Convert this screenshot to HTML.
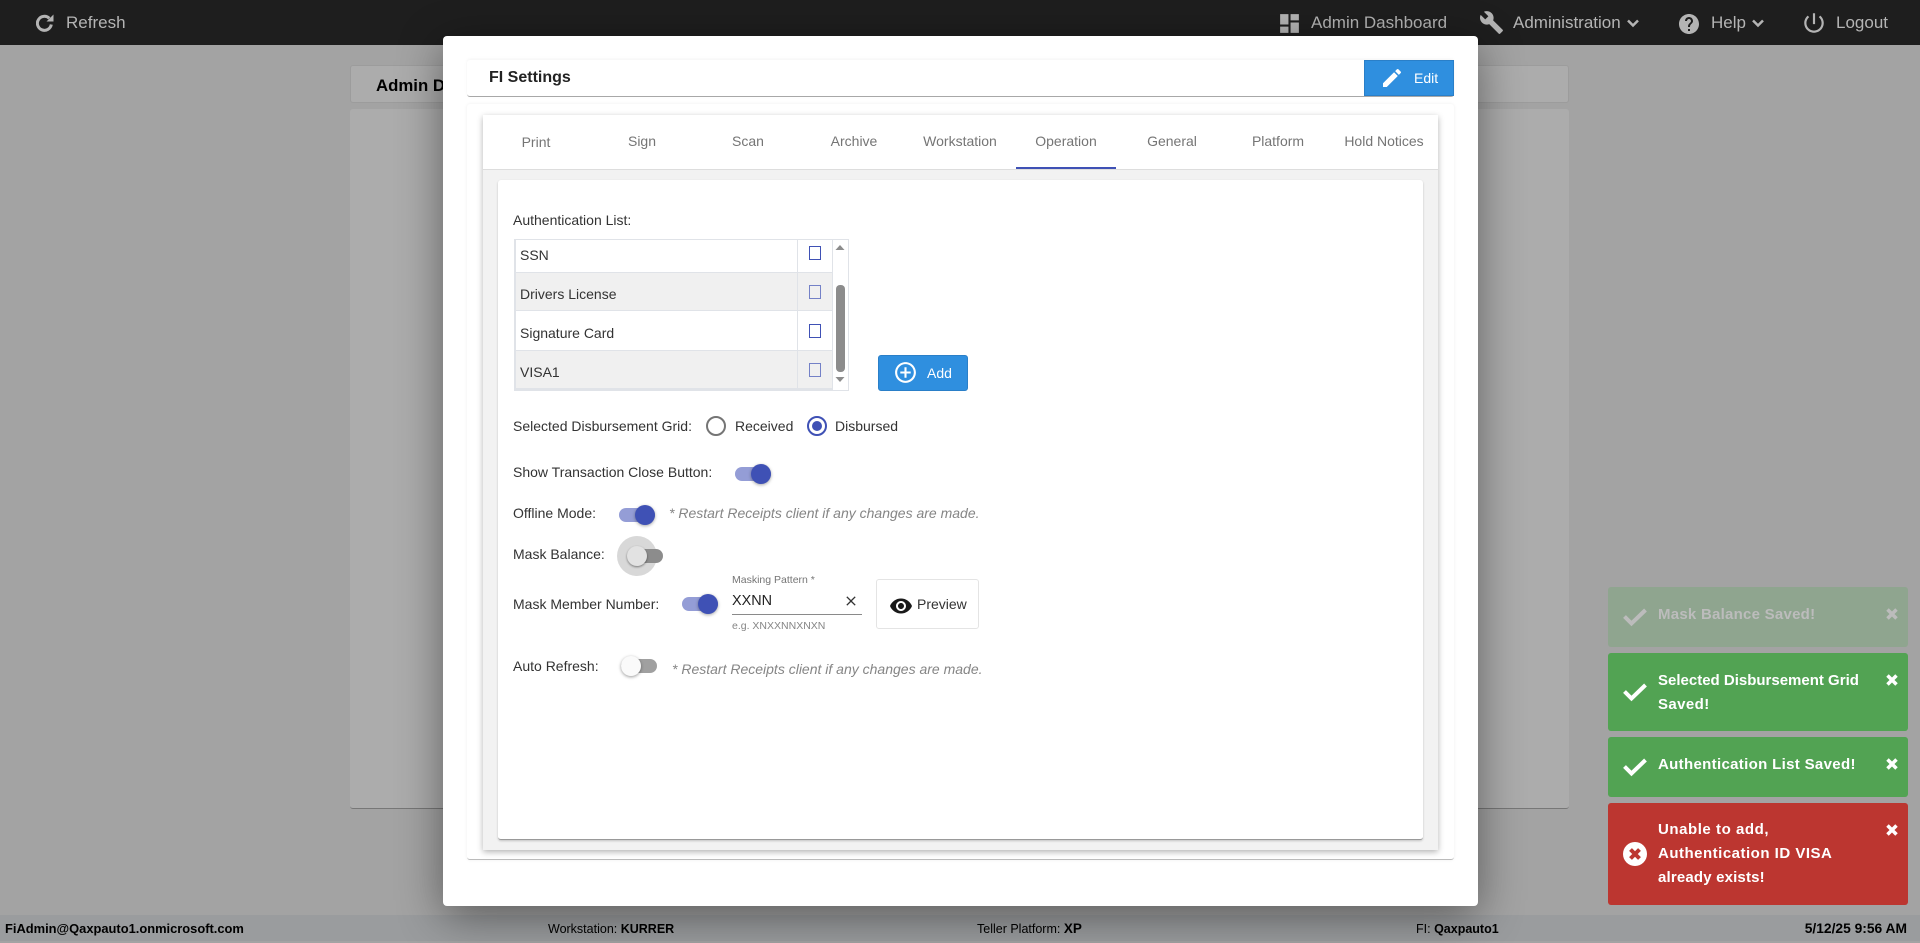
<!DOCTYPE html>
<html><head><meta charset="utf-8"><title>FI Settings</title>
<style>
*{box-sizing:border-box}
html,body{margin:0;padding:0;width:1920px;height:941px;overflow:hidden;background:#a3a3a3;font-family:"Liberation Sans",sans-serif;color:#333}
.a{position:absolute}
.t{position:absolute;white-space:nowrap;line-height:20px;font-size:14px;color:#333;transform:translateY(-10px)}
.nav{position:absolute;left:0;top:0;width:1920px;height:45px;background:#1e1e1e}
.nt{position:absolute;top:13px;font-size:17px;line-height:20px;color:#b4b4b4;white-space:nowrap}
.foot{position:absolute;left:0;top:915px;width:1920px;height:26px;background:#9a9c9e;font-size:12.500px;line-height:28px;color:#000;white-space:nowrap}
.foot span{position:absolute;top:0}
.tab{position:absolute;top:131px;width:106px;text-align:center;font-size:14px;line-height:20px;color:#757575;white-space:nowrap}
.track{position:absolute;width:36px;height:14px;border-radius:7px;background:#949dd6}
.thumb{position:absolute;width:20px;height:20px;border-radius:50%;background:#3f51b5;box-shadow:0 1px 3px rgba(0,0,0,.35)}
.toast{position:absolute;left:1608px;width:300px;border-radius:3px;color:#fff;font-weight:bold;font-size:15px;line-height:24px}
.toast .m{position:absolute;left:50px;white-space:nowrap}
.toast svg{position:absolute}
.cb{position:absolute;width:12px;height:14px;border:1px solid #3f51b5;background:transparent}
</style></head><body>

<div class="a" style="left:350px;top:65px;width:1219px;height:38px;background:#acacac;border:1px solid #9c9c9c;border-radius:3px"></div>
<div class="t" style="left:376px;top:86px;font-size:16.800px;font-weight:bold;color:#000">Admin Dashboard</div>
<div class="a" style="left:350px;top:109px;width:1219px;height:700px;background:#acacac;border-bottom:1px solid #777;border-radius:3px"></div>

<div class="nav">
<svg class="a" style="left:36px;top:14px" width="18" height="18" viewBox="0 0 18 18" fill="none"><path d="M13.300 4.300A7 7 0 1 0 15.300 10.500" stroke="#b4b4b4" stroke-width="3"/><path d="M17.500 .5V7.500H10.500Z" fill="#b4b4b4"/></svg>
<div class="nt" style="left:66px">Refresh</div>
<svg class="a" style="left:1277px;top:11px" width="25" height="25" viewBox="0 0 24 24" fill="#b4b4b4"><path d="M3 13h8V3H3v10zm0 8h8v-6H3v6zm10 0h8V11h-8v10zm0-18v6h8V3h-8z"/></svg>
<div class="nt" style="left:1311px">Admin Dashboard</div>
<svg class="a" style="left:1479px;top:10px" width="25" height="25" viewBox="0 0 24 24" fill="#b4b4b4"><path d="M22.700 19l-9.100-9.100c.9-2.300.4-5-1.500-6.900-2-2-5-2.400-7.400-1.300L9 6 6 9 1.600 4.700C.4 7.100.9 10.100 2.900 12.100c1.900 1.900 4.600 2.400 6.900 1.500l9.100 9.100c.4.4 1 .4 1.400 0l2.300-2.300c.5-.4.5-1.100.1-1.400z"/></svg>
<div class="nt" style="left:1513px">Administration</div>
<svg class="a" style="left:1625px;top:15px" width="16" height="16" viewBox="0 0 16 16" fill="none" stroke="#b4b4b4" stroke-width="2.500"><path d="M3 5.500l5 5 5-5"/></svg>
<svg class="a" style="left:1677px;top:11.500px" width="24" height="24" viewBox="0 0 24 24" fill="#b4b4b4"><path d="M12 2C6.480 2 2 6.480 2 12s4.480 10 10 10 10-4.480 10-10S17.520 2 12 2zm1 17h-2v-2h2v2zm2.070-7.750l-.9.920C13.450 12.900 13 13.500 13 15h-2v-.5c0-1.100.45-2.100 1.170-2.830l1.240-1.260c.37-.36.59-.86.59-1.410 0-1.100-.9-2-2-2s-2 .9-2 2H8c0-2.210 1.790-4 4-4s4 1.790 4 4c0 .88-.36 1.680-.93 2.250z"/></svg>
<div class="nt" style="left:1711px">Help</div>
<svg class="a" style="left:1750px;top:15px" width="16" height="16" viewBox="0 0 16 16" fill="none" stroke="#b4b4b4" stroke-width="2.500"><path d="M3 5.500l5 5 5-5"/></svg>
<svg class="a" style="left:1801px;top:10px" width="26" height="26" viewBox="0 0 24 24" fill="#b4b4b4"><path d="M13 3h-2v10h2V3zm4.830 2.170l-1.420 1.420C17.990 7.860 19 9.810 19 12c0 3.870-3.130 7-7 7s-7-3.130-7-7c0-2.190 1.010-4.140 2.580-5.420L6.170 5.170C4.230 6.820 3 9.260 3 12c0 4.970 4.030 9 9 9s9-4.030 9-9c0-2.740-1.230-5.180-3.170-6.830z"/></svg>
<div class="nt" style="left:1836px">Logout</div>
</div>

<div class="foot">
<span style="left:5px;font-weight:bold;font-size:12.900px">FiAdmin@Qaxpauto1.onmicrosoft.com</span>
<span style="left:548px">Workstation: <b>KURRER</b></span>
<span style="left:977px">Teller Platform: <b style="font-size:13.500px">XP</b></span>
<span style="left:1416px">FI: <b>Qaxpauto1</b></span>
<span style="right:13px;font-weight:bold;font-size:13.800px">5/12/25 9:56 AM</span>
</div>

<!-- modal -->
<div class="a" style="left:443px;top:36px;width:1035px;height:870px;background:#fff;border-radius:4px;box-shadow:0 10px 45px rgba(0,0,0,.45)"></div>
<div class="a" style="left:467px;top:60px;width:987px;height:37px;background:#fff;border-radius:3px;border-bottom:1px solid #a8a8a8;box-shadow:0 -1px 3px rgba(0,0,0,.05)"></div>
<div class="t" style="left:489px;top:78px;font-size:16px;font-weight:bold;color:#222">FI Settings</div>
<div class="a" style="left:1364px;top:60px;width:90px;height:36px;background:#2f8fdf;border:1px solid #2a7fc8"></div>
<svg class="a" style="left:1380px;top:66px" width="24" height="24" viewBox="0 0 24 24" fill="#fff"><path d="M3 17.250V21h3.750L17.810 9.940l-3.750-3.750L3 17.250zM20.710 7.040c.39-.39.39-1.020 0-1.410l-2.340-2.340c-.39-.39-1.020-.39-1.410 0l-1.830 1.830 3.750 3.750 1.830-1.830z"/></svg>
<div class="t" style="left:1414px;top:78px;font-size:14px;color:#fff">Edit</div>

<div class="a" style="left:467px;top:104px;width:987px;height:756px;background:#fff;border-radius:3px;border-bottom:1px solid #bbb;box-shadow:0 0 3px rgba(0,0,0,.07)"></div>
<div class="a" style="left:483px;top:115px;width:955px;height:735px;background:#f2f2f2;box-shadow:0 2px 6px rgba(0,0,0,.3)"></div>
<div class="a" style="left:483px;top:115px;width:955px;height:55px;background:#fff;border-bottom:1px solid #ddd"></div>
<div class="tab" style="left:483px;top:132px">Print</div>
<div class="tab" style="left:589px">Sign</div>
<div class="tab" style="left:695px">Scan</div>
<div class="tab" style="left:801px">Archive</div>
<div class="tab" style="left:907px">Workstation</div>
<div class="tab" style="left:1013px">Operation</div>
<div class="tab" style="left:1119px">General</div>
<div class="tab" style="left:1225px">Platform</div>
<div class="tab" style="left:1331px">Hold Notices</div>
<div class="a" style="left:1016px;top:167px;width:100px;height:2px;background:#3f51b5"></div>

<div class="a" style="left:498px;top:180px;width:925px;height:660px;background:#fff;border-radius:3px;border-bottom:1px solid #999;box-shadow:0 1px 2px rgba(0,0,0,.2)"></div>

<div class="t" style="left:513px;top:220px">Authentication List:</div>
<div class="a" style="left:514px;top:239px;width:335px;height:152px;background:#fff;border:1px solid #e0e3e8"></div>
<div class="a" style="left:515px;top:240px;width:317px;height:32px;background:#fff"></div>
<div class="a" style="left:515px;top:272px;width:317px;height:39px;background:#f0f0f0;border-top:1px solid #e0e3e8;border-bottom:1px solid #e0e3e8"></div>
<div class="a" style="left:515px;top:350px;width:317px;height:40px;background:#f0f0f0;border-top:1px solid #e0e3e8;border-bottom:2px solid #e0e3e8"></div>
<div class="a" style="left:797px;top:240px;width:1px;height:150px;background:#e0e3e8"></div>
<div class="a" style="left:832px;top:240px;width:1px;height:150px;background:#e0e3e8"></div>
<div class="a" style="left:515px;top:240px;width:1px;height:150px;background:#e0e3e8"></div>
<div class="t" style="left:520px;top:255px">SSN</div>
<div class="t" style="left:520px;top:294px">Drivers License</div>
<div class="t" style="left:520px;top:333px">Signature Card</div>
<div class="t" style="left:520px;top:372px">VISA1</div>
<div class="cb" style="left:809px;top:246px"></div>
<div class="cb" style="left:809px;top:285px;opacity:.7"></div>
<div class="cb" style="left:809px;top:324px"></div>
<div class="cb" style="left:809px;top:363px;opacity:.7"></div>
<svg class="a" style="left:834px;top:243px" width="12" height="8"><path d="M1.500 7L6 2l4.500 5z" fill="#8c8c8c"/></svg>
<svg class="a" style="left:834px;top:376px" width="12" height="8"><path d="M1.500 1L6 6l4.500-5z" fill="#8c8c8c"/></svg>
<div class="a" style="left:836px;top:285px;width:9px;height:87px;background:#8c8c8c;border-radius:4px"></div>

<div class="a" style="left:878px;top:355px;width:90px;height:36px;background:#2f8fdf;border-radius:3px;border:1px solid #2a7fc8"></div>
<svg class="a" style="left:893px;top:360px" width="25" height="25" viewBox="0 0 24 24" fill="#fff"><path d="M13 7h-2v4H7v2h4v4h2v-4h4v-2h-4V7zm-1-5C6.480 2 2 6.480 2 12s4.480 10 10 10 10-4.480 10-10S17.520 2 12 2zm0 18c-4.410 0-8-3.590-8-8s3.590-8 8-8 8 3.590 8 8-3.590 8-8 8z"/></svg>
<div class="t" style="left:927px;top:373px;color:#fff;font-size:14px">Add</div>

<div class="t" style="left:513px;top:426px">Selected Disbursement Grid:</div>
<div class="a" style="left:706px;top:416px;width:20px;height:20px;border-radius:50%;border:2px solid #757575;background:#fff"></div>
<div class="t" style="left:735px;top:426px">Received</div>
<div class="a" style="left:807px;top:416px;width:20px;height:20px;border-radius:50%;border:2px solid #3f51b5;background:#fff"></div>
<div class="a" style="left:812px;top:421px;width:10px;height:10px;border-radius:50%;background:#3f51b5"></div>
<div class="t" style="left:835px;top:426px">Disbursed</div>

<div class="t" style="left:513px;top:472px">Show Transaction Close Button:</div>
<div class="track" style="left:735px;top:467px"></div><div class="thumb" style="left:751px;top:464px"></div>

<div class="t" style="left:513px;top:513px">Offline Mode:</div>
<div class="track" style="left:619px;top:508px"></div><div class="thumb" style="left:635px;top:505px"></div>
<div class="t" style="left:669px;top:513px;font-style:italic;color:#858585">* Restart Receipts client if any changes are made.</div>

<div class="t" style="left:513px;top:554px">Mask Balance:</div>
<div class="a" style="left:617px;top:536px;width:40px;height:40px;border-radius:50%;background:#d8d8d8"></div>
<div class="a" style="left:637px;top:549px;width:26px;height:14px;border-radius:0 7px 7px 0;background:#8c8c8c"></div>
<div class="a" style="left:627px;top:546px;width:20px;height:20px;border-radius:50%;background:#e2e2e2;box-shadow:0 1px 2px rgba(0,0,0,.45)"></div>

<div class="t" style="left:513px;top:604px">Mask Member Number:</div>
<div class="track" style="left:682px;top:597px"></div><div class="thumb" style="left:698px;top:594px"></div>
<div class="t" style="left:732px;top:580px;font-size:10.500px;color:#757575">Masking Pattern *</div>
<div class="t" style="left:732px;top:601px;font-size:14.400px;color:#222">XXNN</div>
<svg class="a" style="left:843px;top:593px" width="16" height="16" viewBox="0 0 24 24" fill="#333"><path d="M19 6.410L17.590 5 12 10.590 6.410 5 5 6.410 10.590 12 5 17.590 6.410 19 12 13.410 17.590 19 19 17.590 13.410 12z"/></svg>
<div class="a" style="left:732px;top:614px;width:130px;height:1px;background:#8a8a8a"></div>
<div class="t" style="left:732px;top:626px;font-size:10.500px;color:#858585">e.g. XNXXNNXNXN</div>
<div class="a" style="left:876px;top:579px;width:103px;height:50px;background:#fff;border:1px solid #e4e4e4;border-radius:3px"></div>
<svg class="a" style="left:889px;top:594px" width="24" height="24" viewBox="0 0 24 24" fill="#1a1a1a"><path d="M12 4.500C7 4.500 2.730 7.610 1 12c1.730 4.390 6 7.500 11 7.500s9.270-3.110 11-7.500c-1.730-4.390-6-7.500-11-7.500zM12 17c-2.760 0-5-2.240-5-5s2.240-5 5-5 5 2.240 5 5-2.240 5-5 5zm0-8c-1.660 0-3 1.340-3 3s1.340 3 3 3 3-1.340 3-3-1.340-3-3-3z"/></svg>
<div class="t" style="left:917px;top:604px">Preview</div>

<div class="t" style="left:513px;top:666px">Auto Refresh:</div>
<div class="a" style="left:621px;top:659px;width:36px;height:14px;border-radius:7px;background:#a0a0a0"></div>
<div class="a" style="left:621px;top:656px;width:20px;height:20px;border-radius:50%;background:#fafafa;box-shadow:0 1px 3px rgba(0,0,0,.4)"></div>
<div class="t" style="left:672px;top:669px;font-style:italic;color:#858585">* Restart Receipts client if any changes are made.</div>

<!-- toasts -->
<div class="toast" style="top:587px;height:60px;background:#8fa58f;color:#bcbcbc">
<svg style="left:15px;top:17px" width="24" height="24" viewBox="0 0 24 24" fill="none" stroke="#bcbcbc" stroke-width="4"><path d="M1.500 12.500l7 7L22.500 6"/></svg>
<div class="m" style="top:16px;letter-spacing:.25px">Mask Balance Saved!</div>
<svg style="left:278px;top:21px" width="12" height="12" viewBox="0 0 12 12" stroke="#bcbcbc" stroke-width="3.500"><path d="M1.500 1.500l9 9M10.500 1.500l-9 9"/></svg>
</div>
<div class="toast" style="top:653px;height:78px;background:#52a353">
<svg style="left:15px;top:26px" width="24" height="24" viewBox="0 0 24 24" fill="none" stroke="#fff" stroke-width="4"><path d="M1.500 12.500l7 7L22.500 6"/></svg>
<div class="m" style="top:16px">Selected Disbursement Grid<br><span style="letter-spacing:.4px">Saved!</span></div>
<svg style="left:278px;top:21px" width="12" height="12" viewBox="0 0 12 12" stroke="#fff" stroke-width="3.500"><path d="M1.500 1.500l9 9M10.500 1.500l-9 9"/></svg>
</div>
<div class="toast" style="top:737px;height:60px;background:#52a353">
<svg style="left:15px;top:17px" width="24" height="24" viewBox="0 0 24 24" fill="none" stroke="#fff" stroke-width="4"><path d="M1.500 12.500l7 7L22.500 6"/></svg>
<div class="m" style="top:16px;letter-spacing:.33px">Authentication List Saved!</div>
<svg style="left:278px;top:21px" width="12" height="12" viewBox="0 0 12 12" stroke="#fff" stroke-width="3.500"><path d="M1.500 1.500l9 9M10.500 1.500l-9 9"/></svg>
</div>
<div class="toast" style="top:803px;height:102px;background:#bc3630">
<svg style="left:15px;top:39px" width="24" height="24" viewBox="0 0 24 24"><circle cx="12" cy="12" r="12" fill="#fff"/><path d="M7.500 7.500l9 9M16.500 7.500l-9 9" stroke="#bc3630" stroke-width="4"/></svg>
<div class="m" style="top:15px"><span style="letter-spacing:.55px">Unable to add,</span><br><span style="letter-spacing:.5px">Authentication ID VISA</span><br><span style="letter-spacing:.17px">already exists!</span></div>
<svg style="left:278px;top:21px" width="12" height="12" viewBox="0 0 12 12" stroke="#fff" stroke-width="3.500"><path d="M1.500 1.500l9 9M10.500 1.500l-9 9"/></svg>
</div>
</body></html>
